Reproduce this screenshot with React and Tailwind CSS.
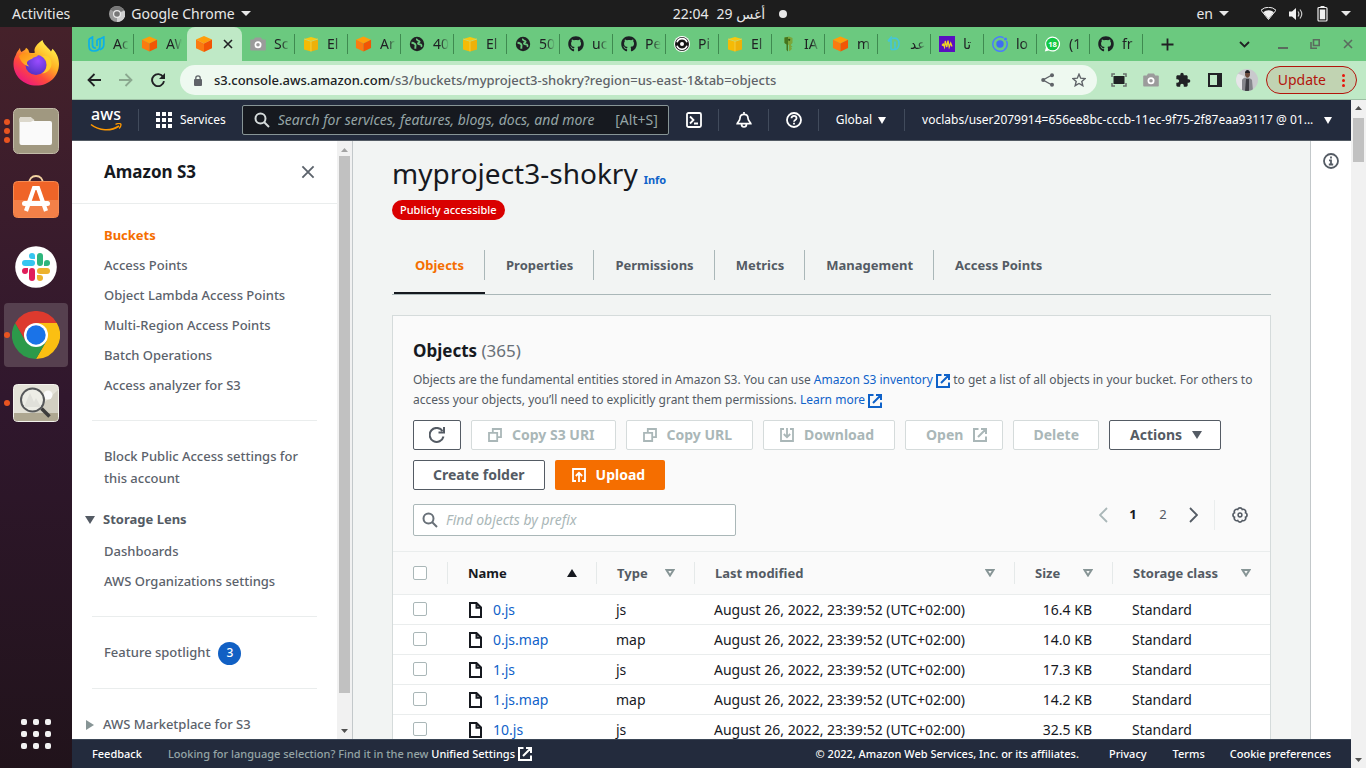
import React from "react";
import { FaGithub } from "react-icons/fa";

const tri = "M0 0h10L5 8z";

function Down({ className = "", w = 10, h = 8 }) {
  return (
    <svg width={w} height={h} viewBox="0 0 10 8" preserveAspectRatio="none" className={className} aria-hidden="true">
      <path d={tri} fill="currentColor" />
    </svg>
  );
}

function SortDown() {
  return (
    <svg width="10" height="8" viewBox="0 0 10 8" className="shrink-0 text-[#879596]" aria-hidden="true">
      <path d="M1.500 1h7L5 6.500z" fill="none" stroke="currentColor" strokeWidth="2" />
    </svg>
  );
}

function Cube() {
  return (
    <svg width="18" height="18" viewBox="0 0 18 18" aria-hidden="true">
      <path d="M9 1l8 3.4-8 4.2-8-4.2z" fill="#ff9d0a" />
      <path d="M1 4.4l8 4.2V17l-8-3.8z" fill="#fb7a10" />
      <path d="M17 4.4L9 8.6V17l8-3.8z" fill="#f25505" />
    </svg>
  );
}

function YellowBox() {
  return (
    <svg width="16" height="16" viewBox="0 0 16 16" aria-hidden="true">
      <path d="M1 3l7-2 7 2-7 2z" fill="#f7c90f" />
      <path d="M1 3.5l7 2V15.500L1 13.500z" fill="#f5bb06" />
      <path d="M15 3.5l-7 2V15.500l7-2z" fill="#eeb109" />
      <path d="M1 3l7 2.300L15 3M8 5.300V15.500" fill="none" stroke="#f9dc62" strokeWidth="0.600" />
    </svg>
  );
}

function GlobeIcon() {
  return (
    <svg width="16" height="16" viewBox="0 0 16 16" aria-hidden="true">
      <circle cx="8" cy="8" r="7.2" fill="#202124" />
      <path d="M2.500 6.800c2 .2 3.600.9 4 2.200.3 1.300-.6 1.400 0 3.800" fill="none" stroke="#6bc97f" strokeWidth="1.900" />
      <path d="M8 2.600c-.8 1.500 1 2 2.200 2.400 1 .4.300 1.500-.8 1.900-1.200.5 0 1.400 1.400 1.500 1.700.100 2.200 1 1.400 2.400" fill="none" stroke="#6bc97f" strokeWidth="1.700" />
    </svg>
  );
}

function CameraIcon() {
  return (
    <svg width="16" height="16" viewBox="0 0 16 16" aria-hidden="true">
      <path d="M5 1.5h6l1.2 2H15a.8.8 0 01.8.8v9.4a.8.8 0 01-.8.8H1a.8.8 0 01-.8-.8V4.3A.8.8 0 011 3.500h2.800z" fill="#9b9b9b" />
      <circle cx="8" cy="8.800" r="3.500" fill="#fff" />
      <circle cx="8" cy="8.800" r="1.800" fill="#9b9b9b" />
    </svg>
  );
}

function UdacityIcon() {
  return (
    <svg width="17" height="16" viewBox="0 0 17 16" fill="none" stroke="#0bb0e8" strokeWidth="1.700" aria-hidden="true">
      <path d="M1 3.200L4.500 1v8c0 2 1.500 3.200 3.300 3.200M1 3.200V10c0 3 2 5 5 5 4.500 0 6-3 6-5.500V3l3.800-2v7.500c0 2.500-2 4.500-4 5.300M9 4v6M9 4l3-1.500" />
    </svg>
  );
}

function CircleCi() {
  return (
    <svg width="16" height="16" viewBox="0 0 16 16" aria-hidden="true">
      <circle cx="8" cy="8" r="8" fill="#fff" />
      <circle cx="8" cy="8" r="7" fill="#161616" />
      <path d="M3 6.200a5.300 5.300 0 0110 0M3 9.800a5.300 5.300 0 0010 0" fill="none" stroke="#fff" strokeWidth="1.600" />
      <circle cx="8" cy="8" r="2" fill="#fff" />
    </svg>
  );
}

function KeyIcon() {
  return (
    <svg width="16" height="16" viewBox="0 0 16 16" aria-hidden="true">
      <path d="M4.500 1.500L9 .500l3.500 1.500v5L11 8.500v1l1.500 1-1.500 1 1 1-1 1.500-2 1.200V9L4.500 7z" fill="#7ba63a" />
      <path d="M4.500 1.500L8 1v14.500L6.500 14V8.500l-2-1.500z" fill="#44741c" />
      <circle cx="9.200" cy="3.800" r="1.100" fill="#2f5412" />
    </svg>
  );
}

function PaleD() {
  return (
    <svg width="16" height="16" viewBox="0 0 16 16" fill="none" stroke="#45c6d8" strokeWidth="1.600" aria-hidden="true">
      <path d="M2 5l3-3.500v12M5 5H2M6 2.500c5-1.500 7 1.500 7 5s-2 6-4 6V5.500M9 13.500H5" />
    </svg>
  );
}

function PurpleSquare() {
  return (
    <svg width="16" height="16" viewBox="0 0 16 16" aria-hidden="true">
      <path d="M0 0h16v16H0z" fill="#5a0fc0" />
      <path d="M3 9.500l1.200-1.500L5.500 11 6.300 5l1.500 6L9 4.500l1.200 6.500 1.500-4L13 10.500" fill="none" stroke="#f1d325" strokeWidth="1.300" />
    </svg>
  );
}

function IonicIcon() {
  return (
    <svg width="16" height="16" viewBox="0 0 16 16" aria-hidden="true">
      <path d="M11.500 1.800A7.200 7.200 0 1014.500 5" fill="none" stroke="#4b7bff" strokeWidth="1.500" />
      <circle cx="8" cy="8" r="3.700" fill="#3f6df0" />
      <circle cx="13.500" cy="3" r="1.600" fill="#4b7bff" />
    </svg>
  );
}

function WhatsApp() {
  return (
    <svg width="17" height="16" viewBox="0 0 17 16" aria-hidden="true">
      <path d="M8.500.500a7.500 7.500 0 11-3.700 14L.800 15.500l1.200-4A7.500 7.500 0 018.500.500z" fill="#fff" />
      <circle cx="8.500" cy="8" r="6.300" fill="#12c843" />
      <text x="8.500" y="10.700" textAnchor="middle" fontSize="7.500" fontWeight="700" fill="#fff" fontFamily="Noto Sans, sans-serif">18</text>
    </svg>
  );
}

function Github() {
  return <FaGithub size={16} color="#1c2024" aria-hidden="true" />;
}

const TABS = [
  [UdacityIcon, "Ac"],
  [Cube, "AW"],
  [Cube, null],
  [CameraIcon, "Sc"],
  [YellowBox, "El"],
  [Cube, "Ar"],
  [GlobeIcon, "40"],
  [YellowBox, "El"],
  [GlobeIcon, "50"],
  [Github, "uc"],
  [Github, "Pe"],
  [CircleCi, "Pi"],
  [YellowBox, "El"],
  [KeyIcon, "IA"],
  [Cube, "m"],
  [PaleD, "عد"],
  [PurpleSquare, "تا"],
  [IonicIcon, "lo"],
  [WhatsApp, "(1"],
  [Github, "fr"],
];

function CloseX({ size = 10, className = "" }) {
  return (
    <svg width={size} height={size} viewBox="0 0 10 10" className={className} aria-hidden="true">
      <path d="M1 1l8 8M9 1L1 9" stroke="currentColor" strokeWidth={size > 12 ? 1.3 : 1.6} fill="none" />
    </svg>
  );
}

function TopBar() {
  return (
    <header className="grid h-[27px] shrink-0 grid-cols-[1fr_auto_1fr] items-center bg-[#1d1d1d] text-sm text-[#e8e8e8]">
      <div className="flex items-center gap-[39px] pl-3">
        <button>Activities</button>
        <button className="flex items-center gap-1.5">
          <svg width="16" height="16" viewBox="0 0 16 16" aria-hidden="true">
            <circle cx="8" cy="8" r="8" fill="#9a9a9a" />
            <path d="M8 8L1.500 3.500A8 8 0 0114.800 4z" fill="#777" />
            <path d="M8 8l7.500-3.500A8 8 0 018 16z" fill="#d0d0d0" />
            <circle cx="8" cy="8" r="4" fill="#ececec" />
            <circle cx="8" cy="8" r="2.800" fill="#777" />
          </svg>
          <span>Google Chrome</span>
          <Down w={10} h={5} />
        </button>
      </div>
      <button className="flex items-center gap-2 pl-[94px]">
        <span>22:04</span>
        <span dir="ltr">29 أغس</span>
        <span className="ml-1.5 size-2 rounded-full bg-[#e8e8e8]" />
      </button>
      <div className="flex items-center justify-end pr-[15px]">
        <button className="mr-8 flex items-center gap-1.5">
          en <Down w={10} h={5} />
        </button>
        <button className="flex items-center gap-[13px]" aria-label="System">
          <svg width="15" height="13" viewBox="0 0 15 13" aria-hidden="true">
            <path d="M0 3.200a11 11 0 0115 0L7.500 12.500z" fill="none" stroke="#f0f0f0" strokeWidth="1" />
            <path d="M2.200 5.200a8.500 8.500 0 0110.600 0L7.500 12z" fill="#f0f0f0" />
          </svg>
          <svg width="15" height="14" viewBox="0 0 15 14" aria-hidden="true">
            <path d="M0 4.500h3L7 1v12L3 9.500H0z" fill="#f0f0f0" />
            <path d="M9 4.500q1.800 2.500 0 5M11 2.500q3.500 4.500 0 9" fill="none" stroke="#c8c8c8" strokeWidth="1.200" />
          </svg>
          <svg width="11" height="16" viewBox="0 0 11 16" aria-hidden="true">
            <path d="M3.500 0h4v1.500h-4z" fill="#f0f0f0" />
            <rect x="1" y="1.500" width="9" height="13.500" rx="1" fill="none" stroke="#f0f0f0" strokeWidth="1.200" />
            <path d="M2.800 3.500h5.400v9.800H2.800z" fill="#f0f0f0" />
          </svg>
          <Down w={10} h={5} />
        </button>
      </div>
    </header>
  );
}

function Firefox() {
  return (
    <svg width="46" height="46" viewBox="0 0 46 48" preserveAspectRatio="none" aria-hidden="true">
      <defs>
        <linearGradient id="ffa" x1="0.850" y1="0.100" x2="0.200" y2="1">
          <stop offset="0" stopColor="#fff44f" />
          <stop offset="0.350" stopColor="#ffb224" />
          <stop offset="0.650" stopColor="#ff4a3c" />
          <stop offset="1" stopColor="#e8108a" />
        </linearGradient>
        <radialGradient id="ffb" cx="0.600" cy="0.300" r="0.800">
          <stop offset="0" stopColor="#9a4cff" />
          <stop offset="1" stopColor="#4b2fbf" />
        </radialGradient>
        <linearGradient id="ffc" x1="0" y1="0" x2="1" y2="1">
          <stop offset="0" stopColor="#ff8a16" />
          <stop offset="1" stopColor="#ffc62a" />
        </linearGradient>
      </defs>
      <path d="M29.500 0c1 5 6 8 8.500 12l1.500-3c4.500 5 6.500 10 6.500 16 0 13-10 22.500-22.500 22.500S.500 38 .500 25c0-4 1-7 2.500-9.500.500-2 1.500-4 3-5.500l1-2c0 2 .500 3.500 1.500 4.500 2-1.500 4-2 4.500-4.500 2 1 3 3 3 5 2 .500 4 1 6 0C20 9 24 4 29.500 0z" fill="url(#ffa)" />
      <circle cx="23" cy="26" r="10.500" fill="url(#ffb)" />
      <path d="M6 17c3-5 10-4 13-2 1-.500 5-.500 6 1-1 1.500-3 2-5 2.500-1 2-5 2-6 5-.500 3 3 4 3 4-5 0-9-4-11-10.500z" fill="url(#ffc)" />
      <path d="M29 17c7 4 6 14 0 18 8-1 12-9 8-16-2-3-5-3-8-2z" fill="#ffd22e" opacity="0.900" />
    </svg>
  );
}

function FilesApp() {
  return (
    <svg width="46" height="46" viewBox="0 0 46 46" aria-hidden="true">
      <rect x="0.500" y="0.500" width="45" height="45" rx="5" fill="#a09880" stroke="#c2bba8" />
      <path d="M6.500 11a2 2 0 012-2h9l4 4H37a2 2 0 012 2v20a2 2 0 01-2 2H8.500a2 2 0 01-2-2z" fill="#fafafa" />
      <path d="M6.500 14v-3a2 2 0 012-2h9l4 3-4 2z" fill="#dcd8cc" />
    </svg>
  );
}

function SoftwareApp() {
  return (
    <svg width="46" height="48" viewBox="0 0 46 48" aria-hidden="true">
      <path d="M16 9c0-5 3-8 7-8s7 3 7 8" fill="none" stroke="#f3d3a2" strokeWidth="2" />
      <rect x="0.500" y="6.500" width="45" height="36" rx="4" fill="#ef6428" stroke="#f58b52" />
      <path d="M1 25h44v13a4 4 0 01-4 4H5a4 4 0 01-4-4z" fill="#f38048" />
      <path d="M13 36l8-23h4l8 23" fill="none" stroke="#fff" strokeWidth="4.200" />
      <rect x="9" y="26" width="28" height="5" rx="2.500" fill="#fff" />
    </svg>
  );
}

function SlackApp() {
  return (
    <svg width="42" height="42" viewBox="0 0 42 42" aria-hidden="true">
      <circle cx="21" cy="21" r="20.800" fill="#fff" />
      <g fill="#36c5f0">
        <rect x="7" y="14" width="13" height="6" rx="3" />
        <path d="M20 7v6h-3a3 3 0 113-3z" />
      </g>
      <g fill="#2eb67d">
        <rect x="22" y="7" width="6" height="13" rx="3" />
        <path d="M29 20v-3a3 3 0 113 3z" />
      </g>
      <g fill="#ecb22e">
        <rect x="22" y="22" width="13" height="6" rx="3" />
        <path d="M22 29h3a3 3 0 11-3 3z" />
      </g>
      <g fill="#e01e5a">
        <rect x="14" y="22" width="6" height="13" rx="3" />
        <path d="M13 22v3a3 3 0 11-3-3z" />
      </g>
    </svg>
  );
}

function ChromeApp() {
  return (
    <svg width="48" height="48" viewBox="0 0 48 48" aria-hidden="true">
      <path d="M24 12h20.800A24 24 0 0124 48l10.400-18z" fill="#fbbf12" />
      <path d="M3.200 12l10.400 18L24 36l10.400-6L24 48A24 24 0 013.200 12z" fill="#2c9a4a" />
      <path d="M3.200 12A24 24 0 0144.800 12H24L13.600 30z" fill="#dd3a2e" />
      <circle cx="24" cy="24" r="12" fill="#fff" />
      <circle cx="24" cy="24" r="9.700" fill="#1a73e8" />
    </svg>
  );
}

function ViewerApp() {
  return (
    <svg width="46" height="38" viewBox="0 0 46 38" aria-hidden="true">
      <rect x="0.500" y="0.500" width="45" height="37" rx="4" fill="#e4e2d8" stroke="#f3f2ec" />
      <path d="M1 29h44v5a3 3 0 01-3 3H4a3 3 0 01-3-3z" fill="#aea791" />
      <path d="M20 29L45 6v23z" fill="#d2cfc2" />
      <circle cx="35" cy="11" r="4.500" fill="#fafafa" />
      <circle cx="19.500" cy="16" r="11.500" fill="#eeeee9" fillOpacity="0.850" stroke="#56585a" strokeWidth="2" />
      <path d="M11 23l6-14 4 9 2-4 5 9z" fill="#e0e0da" />
      <path d="M28.500 24.500l8 8" stroke="#3c3c3c" strokeWidth="3.500" />
    </svg>
  );
}

const DOCK = [
  ["Firefox", Firefox, 0],
  ["Files", FilesApp, 3],
  ["Ubuntu Software", SoftwareApp, 0],
  ["Slack", SlackApp, 0],
  ["Google Chrome", ChromeApp, 1],
  ["Image Viewer", ViewerApp, 1],
];

function Dock() {
  return (
    <nav aria-label="Dock" className="flex w-[72px] shrink-0 flex-col items-center justify-between bg-linear-to-b from-[#45212a] via-[#30172d] to-[#21131b] pt-1">
      <div className="flex flex-col gap-1">
        {DOCK.map(([name, Icon, dots]) => (
          <button
            key={name}
            aria-label={name}
            className={`relative flex size-16 items-center justify-center rounded ${name === "Google Chrome" ? "bg-[#56404f]" : ""}`}
          >
            <span className="absolute top-0 bottom-0 left-0 flex flex-col justify-center gap-[3px]">
              {Array.from({ length: dots }, (_, i) => (
                <span key={i} className="size-1.5 rounded-full bg-[#e95420]" />
              ))}
            </span>
            <Icon />
          </button>
        ))}
      </div>
      <button aria-label="Show applications" className="mb-[19px] grid grid-cols-3 gap-1.5">
        {Array.from({ length: 9 }, (_, i) => (
          <span key={i} className="size-1.5 rounded-[2px] bg-[#f2f2f2]" />
        ))}
      </button>
    </nav>
  );
}

function TabStrip() {
  return (
    <div className="flex h-[34px] shrink-0 items-stretch bg-[#6bc97f] pl-[9px] text-sm text-[#202124]">
      {TABS.map(([Icon, label], i) =>
        label === null ? (
          <button key={i} aria-label="Active tab" className="flex w-[55px] shrink-0 items-center gap-2.5 rounded-t-lg bg-[#bfe9c6] pl-2">
            <Icon />
            <CloseX />
          </button>
        ) : (
          <button key={i} className="flex w-[53px] shrink-0 items-center pl-[7px]">
            <span className="flex w-[17px] justify-center"><Icon /></span>
            <span className="ml-2 w-4 overflow-hidden text-left whitespace-nowrap [mask-image:linear-gradient(to_right,#000_45%,transparent)]">{label}</span>
            <span className={`ml-auto h-5 w-px ${i === 1 ? "bg-transparent" : "bg-[#3f8a50]"}`} />
          </button>
        )
      )}
      <button aria-label="New tab" className="ml-[18px] flex items-center">
        <svg width="13" height="13" viewBox="0 0 13 13" aria-hidden="true">
          <path d="M6.500 0.500v12M0.500 6.500h12" stroke="#202124" strokeWidth="1.800" />
        </svg>
      </button>
      <div className="ml-auto flex items-center pr-[13px] text-[#5a6b5e]">
        <button aria-label="Search tabs">
          <svg width="11" height="7" viewBox="0 0 11 7" aria-hidden="true">
            <path d="M1 1l4.500 4.500L10 1" fill="none" stroke="#202124" strokeWidth="1.800" />
          </svg>
        </button>
        <button aria-label="Minimize" className="ml-7 mt-2">
          <svg width="10" height="2" aria-hidden="true"><path d="M0 0h10v2H0z" fill="currentColor" /></svg>
        </button>
        <button aria-label="Restore" className="ml-[22px]">
          <svg width="10" height="10" viewBox="0 0 10 10" fill="none" stroke="currentColor" strokeWidth="1.600" aria-hidden="true">
            <path d="M3.500 0.800h5.700v5.700H3.500zM1 3v6.200h6" />
          </svg>
        </button>
        <button aria-label="Close" className="ml-[23px]"><CloseX size={10} /></button>
      </div>
    </div>
  );
}

function Toolbar() {
  return (
    <div className="flex h-[39px] shrink-0 items-center border-b border-[#9dbfa4] bg-[#bfe9c6] pl-[15px] pr-[9px] text-sm text-[#202124]">
      <button aria-label="Back">
        <svg width="14" height="14" viewBox="0 0 14 14" fill="none" stroke="#202124" strokeWidth="1.800" aria-hidden="true"><path d="M14 7H1.500M7.500 1l-6 6 6 6" /></svg>
      </button>
      <button aria-label="Forward" className="ml-[18px]">
        <svg width="14" height="14" viewBox="0 0 14 14" fill="none" stroke="#8ba88f" strokeWidth="1.800" aria-hidden="true"><path d="M0 7h12.500M6.500 1l6 6-6 6" /></svg>
      </button>
      <button aria-label="Reload" className="ml-[18px]">
        <svg width="14" height="14" viewBox="0 0 14 14" aria-hidden="true">
          <path d="M12.200 4A6 6 0 1013 8.200" fill="none" stroke="#202124" strokeWidth="1.900" />
          <path d="M14 0v6H8z" fill="#202124" />
        </svg>
      </button>
      <div className="ml-[15px] flex h-[30px] min-w-0 flex-1 items-center rounded-full bg-[#eef9f0] pr-[11px] pl-3.5">
        <svg width="8" height="11" viewBox="0 0 8 11" className="shrink-0" aria-hidden="true">
          <rect x="0" y="4" width="8" height="7" rx="1" fill="#5f6368" />
          <path d="M1.800 4.500V3a2.200 2.200 0 014.400 0v1.500" fill="none" stroke="#5f6368" strokeWidth="1.300" />
        </svg>
        <div className="ml-3 min-w-0 flex-1 overflow-hidden text-[13px] font-medium whitespace-nowrap text-[#5f6368]" role="textbox" aria-label="Address">
          <span className="text-[#202124]">s3.console.aws.amazon.com</span>/s3/buckets/myproject3-shokry?region=us-east-1&amp;tab=objects
        </div>
        <button aria-label="Share">
          <svg width="13" height="14" viewBox="0 0 13 14" fill="#5f6368" aria-hidden="true">
            <path d="M11 2L2 7l9 5" fill="none" stroke="#5f6368" strokeWidth="1.400" />
            <circle cx="11" cy="2.200" r="2" /><circle cx="2.200" cy="7" r="2" /><circle cx="11" cy="11.800" r="2" />
          </svg>
        </button>
        <button aria-label="Bookmark" className="ml-[18px]">
          <svg width="14" height="14" viewBox="0 0 14 14" fill="none" stroke="#5f6368" strokeWidth="1.400" aria-hidden="true">
            <path d="M7 1.200l1.700 4 4.400.400-3.300 2.900 1 4.200L7 10.500l-3.800 2.200 1-4.200L.900 5.600l4.400-.400z" />
          </svg>
        </button>
      </div>
      <div className="flex items-center gap-4 pl-3.5">
        <button aria-label="Fullscreen capture">
          <svg width="16" height="14" viewBox="0 0 16 14" aria-hidden="true">
            <path d="M1 4V1h3M12 1h3v3M15 10v3h-3M4 13H1v-3" fill="none" stroke="#6a6f6c" strokeWidth="1.500" />
            <rect x="2.500" y="3" width="11" height="8" fill="#202124" />
          </svg>
        </button>
        <button aria-label="Screenshot"><CameraIcon /></button>
        <button aria-label="Extensions">
          <svg width="16" height="16" viewBox="0 0 24 24" fill="#202124" aria-hidden="true">
            <path d="M20.500 11H19V7c0-1.100-.900-2-2-2h-4V3.500a2.500 2.500 0 00-5 0V5H4c-1.100 0-2 .900-2 2v3.800h1.500a2.700 2.700 0 010 5.400H2V20c0 1.100.900 2 2 2h3.800v-1.500a2.700 2.700 0 015.400 0V22H17c1.100 0 2-.900 2-2v-4h1.500a2.500 2.500 0 000-5z" />
          </svg>
        </button>
        <button aria-label="Side panel">
          <svg width="16" height="14" viewBox="0 0 16 14" aria-hidden="true"><path d="M1 0h14v14H1zM3 2v10h7V2z" fillRule="evenodd" fill="#202124" /></svg>
        </button>
        <button aria-label="Profile" className="-ml-[3px]">
          <svg width="22" height="22" viewBox="0 0 22 22" aria-hidden="true">
            <clipPath id="pf"><circle cx="11" cy="11" r="11" /></clipPath>
            <g clipPath="url(#pf)">
              <path d="M0 0h22v22H0z" fill="#c9c9cd" />
              <path d="M0 4l8 3-2 15H0z" fill="#e6e6e8" />
              <path d="M6 22V11c1-3 8-3 10 0l1 11z" fill="#85868c" />
              <path d="M10 10h3v12h-4z" fill="#3b3c42" />
              <path d="M9 5c0-4 5-4 5 0 0 5-5 5-5 0z" fill="#6b4a3c" />
              <path d="M9 4c0-4 5-4 5 0z" fill="#1d1d22" />
            </g>
          </svg>
        </button>
      </div>
      <button className="ml-2 flex h-7 items-center gap-4 rounded-full border border-[#b3140c] bg-[#c1d3b2] px-[11px] text-[#b3140c]">
        Update
        <span className="flex flex-col gap-0.5">
          <span className="size-[3px] rounded-full bg-[#e8140c]" />
          <span className="size-[3px] rounded-full bg-[#e8140c]" />
          <span className="size-[3px] rounded-full bg-[#e8140c]" />
        </span>
      </button>
    </div>
  );
}

function NavSep({ className = "" }) {
  return <span className={`h-[22px] w-px shrink-0 bg-[#414b5c] ${className}`} />;
}

function Magnifier({ className = "" }) {
  return (
    <svg width="16" height="16" viewBox="0 0 16 16" fill="none" stroke="currentColor" strokeWidth="2" className={className} aria-hidden="true">
      <circle cx="6.500" cy="6.500" r="5" /><path d="M10 10l5 5" />
    </svg>
  );
}

function AwsNav() {
  return (
    <header className="flex h-[41px] shrink-0 items-center border-b border-[#545b64] bg-[#232b3d] pl-[18px] pr-[19px] text-xs text-white">
      <a href="#home" className="flex w-8 flex-col items-center" aria-label="aws home">
        <span className="h-3.5 text-base leading-[10px] font-medium">aws</span>
        <svg width="32" height="8" viewBox="0 0 32 8" fill="none" aria-hidden="true">
          <path d="M1 1.500C9 8 21 8.500 29 3" stroke="#ff9900" strokeWidth="1.600" />
          <path d="M25.500 1.300c2-.800 4.500-.900 5.200-.300.500.700-.300 3-1.500 4.500" stroke="#ff9900" strokeWidth="1.300" />
        </svg>
      </a>
      <NavSep className="ml-4" />
      <button className="ml-[17px] flex items-center gap-2">
        <svg width="16" height="16" viewBox="0 0 16 16" fill="#fff" aria-hidden="true">
          <path d="M0 0h4v4H0zM6 0h4v4H6zM12 0h4v4h-4zM0 6h4v4H0zM6 6h4v4H6zM12 6h4v4h-4zM0 12h4v4H0zM6 12h4v4H6zM12 12h4v4h-4z" />
        </svg>
        Services
      </button>
      <label className="ml-4 flex h-[30px] w-[427px] items-center rounded-[2px] border border-[#879596] bg-[#16191f] pl-[11px] pr-2.5">
        <Magnifier className="shrink-0 text-[#d5dbdb]" />
        <input
          aria-label="Search"
          placeholder="Search for services, features, blogs, docs, and more"
          className="ml-2 min-w-0 flex-1 bg-transparent text-sm outline-none placeholder:text-[#95a5a6] placeholder:italic"
        />
        <span className="text-sm text-[#95a5a6]">[Alt+S]</span>
      </label>
      <button aria-label="CloudShell" className="ml-[17px]">
        <svg width="16" height="16" viewBox="0 0 16 16" fill="none" stroke="#fff" strokeWidth="1.800" aria-hidden="true">
          <rect x="1" y="1" width="14" height="14" rx="1.500" /><path d="M4 4.500L7.500 8 4 11.500M8 11.500h4" />
        </svg>
      </button>
      <NavSep className="ml-4" />
      <button aria-label="Notifications" className="ml-[17px]">
        <svg width="16" height="16" viewBox="0 0 16 16" fill="none" stroke="#fff" strokeWidth="1.700" aria-hidden="true">
          <path d="M8 0v2M8 2.300c-2.800 0-4 1.800-4 4C4 9 1.500 10 1.200 11.700h13.600C14.500 10 12 9 12 6.300c0-2.200-1.200-4-4-4zM5.500 12c0 4 5 4 5 0" />
        </svg>
      </button>
      <NavSep className="ml-4" />
      <button aria-label="Help" className="ml-[17px]">
        <svg width="16" height="16" viewBox="0 0 16 16" fill="none" stroke="#fff" strokeWidth="1.800" aria-hidden="true">
          <circle cx="8" cy="8" r="7" /><path d="M5.500 6.300c0-3.200 5-3.100 5 0 0 1.700-2.500 1.700-2.500 3.400M8 10.800v1.700" />
        </svg>
      </button>
      <NavSep className="ml-4" />
      <button className="ml-[17px] flex items-center gap-1.5">Global <Down w={8} h={7} /></button>
      <NavSep className="ml-[18px]" />
      <button className="ml-[17px] flex min-w-0 flex-1 items-center justify-between gap-1 whitespace-nowrap">
        <span>voclabs/user2079914=656ee8bc-cccb-11ec-9f75-2f87eaa93117 @ 01...</span>
        <Down w={8} h={7} className="shrink-0" />
      </button>
    </header>
  );
}

function SideLink({ children, className = "" }) {
  return <a href="#nav" className={`block leading-[30px] ${className}`}>{children}</a>;
}

function Sidebar() {
  return (
    <aside className="flex w-[281px] shrink-0 border-r border-[#c3c8ca] bg-white text-[13px] font-medium text-[#5b626b]">
      <div className="min-w-0 flex-1 overflow-hidden">
        <div className="flex h-[63px] items-center justify-between border-b border-[#eaeded] pl-8 pr-[22px]">
          <h2 className="text-[17px] font-bold text-[#16191f]">Amazon S3</h2>
          <button aria-label="Close navigation"><CloseX size={14} /></button>
        </div>
        <nav className="px-5 pt-4">
          <div className="pl-3">
            <SideLink className="font-bold text-[#f56e00]">Buckets</SideLink>
            <SideLink>Access Points</SideLink>
            <SideLink>Object Lambda Access Points</SideLink>
            <SideLink>Multi-Region Access Points</SideLink>
            <SideLink>Batch Operations</SideLink>
            <SideLink>Access analyzer for S3</SideLink>
          </div>
          <hr className="mt-5 border-[#eaeded]" />
          <a href="#block" className="mt-6 block pl-3 leading-[22px]">Block Public Access settings for this account</a>
          <button className="-ml-[7px] mt-4 flex h-[30px] items-center gap-2 font-bold text-[#545b64]"><Down /> Storage Lens</button>
          <div className="pl-3 pt-px">
            <SideLink>Dashboards</SideLink>
            <SideLink>AWS Organizations settings</SideLink>
          </div>
          <hr className="mt-5 border-[#eaeded]" />
          <a href="#spotlight" className="mt-[21px] flex h-[30px] items-center gap-2 pl-3">
            Feature spotlight
            <span className="flex size-[23px] items-center justify-center rounded-full bg-[#1160c4] text-xs text-white">3</span>
          </a>
          <hr className="mt-5 border-[#eaeded]" />
          <button className="-ml-[7px] mt-[21px] flex h-[30px] items-center gap-[9px]">
            <svg width="9" height="10" viewBox="0 0 9 10" aria-hidden="true"><path d="M1 0l8 5-8 5z" fill="#879596" /></svg>
            AWS Marketplace for S3
          </button>
        </nav>
      </div>
      <div className="flex w-[15px] flex-col items-center gap-1 bg-[#f1f1f1] py-1.5">
        <Down w={7} h={4} className="mt-px shrink-0 rotate-180 text-[#a3a3a3]" />
        <div className="w-[11px] flex-1 bg-[#c1c1c1]" />
        <div className="h-7 shrink-0" />
        <Down w={7} h={4} className="shrink-0 text-[#505050]" />
      </div>
    </aside>
  );
}

function External({ className = "", size = 14 }) {
  return (
    <svg width={size} height={size} viewBox="0 0 14 14" fill="none" stroke="currentColor" strokeWidth="2" className={className} aria-hidden="true">
      <path d="M5.500 1H1v12h12V8.500M8 1h5v5M13 1L5 9" />
    </svg>
  );
}

function CopyIcon() {
  return (
    <svg width="14" height="14" viewBox="0 0 14 14" fill="none" stroke="currentColor" strokeWidth="1.800" aria-hidden="true">
      <path d="M1 4.800h8.200V13H1zM4.800 4.500V1H13v8.200H9.500" />
    </svg>
  );
}

function DownloadIcon() {
  return (
    <svg width="14" height="14" viewBox="0 0 14 14" fill="none" stroke="currentColor" strokeWidth="1.800" aria-hidden="true">
      <path d="M4 1H1v12h12V1h-3M7 0v9M3.800 6L7 9.200 10.200 6" />
    </svg>
  );
}

function UploadIcon() {
  return (
    <svg width="14" height="14" viewBox="0 0 14 14" fill="none" stroke="currentColor" strokeWidth="1.800" aria-hidden="true">
      <path d="M4 13H1V1h12v12h-3M7 14V5M3.800 8L7 4.800 10.200 8" />
    </svg>
  );
}

function Btn({ children, disabled, className = "" }) {
  return (
    <button
      disabled={disabled}
      className={`flex h-[30px] items-center rounded-[2px] border bg-white text-sm font-bold ${disabled ? "border-[#d5dbdb] text-[#aab7b8]" : "border-[#545b64] text-[#545b64]"} ${className}`}
    >
      {children}
    </button>
  );
}

const ROWS = [
  ["0.js", "js", "16.4 KB"],
  ["0.js.map", "map", "14.0 KB"],
  ["1.js", "js", "17.3 KB"],
  ["1.js.map", "map", "14.2 KB"],
  ["10.js", "js", "32.5 KB"],
];

function Check({ label }) {
  return <input type="checkbox" aria-label={label} className="block size-3.5 appearance-none rounded-[2px] border border-[#aab7b8] bg-white" />;
}

function Th({ children, icon }) {
  return (
    <th scope="col" className="py-2.5 pr-0 text-[13px] font-bold text-[#545b64]">
      <span className="flex h-[22px] items-center justify-between border-l border-[#e5e9e9] pl-5 pr-[19px]">
        {children}
        {icon}
      </span>
    </th>
  );
}

function ObjectsTable() {
  return (
    <table className="w-full table-fixed border-t border-[#eaeded] text-left text-sm text-[#16191f]">
      <colgroup>
        <col className="w-[54px]" />
        <col className="w-[149px]" />
        <col className="w-[98px]" />
        <col />
        <col className="w-[98px]" />
        <col className="w-[158px]" />
      </colgroup>
      <thead className="bg-[#fafafa]">
        <tr className="h-[43px] border-b border-[#eaeded]">
          <th className="pl-5"><Check label="Select all" /></th>
          <Th icon={<Down className="rotate-180 text-[#16191f]" />}><span className="text-[#16191f]">Name</span></Th>
          <Th icon={<SortDown />}>Type</Th>
          <Th icon={<SortDown />}>Last modified</Th>
          <Th icon={<SortDown />}>Size</Th>
          <Th icon={<SortDown />}>Storage class</Th>
        </tr>
      </thead>
      <tbody className="bg-white">
        {ROWS.map(([name, type, size]) => (
          <tr key={name} className="h-[30px] border-b border-[#eaeded]">
            <td className="pt-[7px] pl-5 align-top"><Check label={`Select ${name}`} /></td>
            <td className="pl-[22px]">
              <a href={`#${name}`} className="flex items-center gap-[11px] text-[#0f62c9]">
                <svg width="13" height="16" viewBox="0 0 13 16" fill="none" stroke="#16191f" strokeWidth="2" aria-hidden="true">
                  <path d="M1 1h6.500L12 5.500V15H1zM7.500 1v4.800H12" />
                </svg>
                {name}
              </a>
            </td>
            <td className="pl-5">{type}</td>
            <td className="pl-5">August 26, 2022, 23:39:52 (UTC+02:00)</td>
            <td className="pr-5 text-right">{size}</td>
            <td className="pl-5">Standard</td>
          </tr>
        ))}
      </tbody>
    </table>
  );
}

const PAGE_TABS = ["Objects", "Properties", "Permissions", "Metrics", "Management", "Access Points"];

function Main() {
  return (
    <main className="min-w-0 flex-1 overflow-hidden bg-[#f2f4f3] px-[39px] text-[13px]">
      <div className="mt-3 flex items-baseline gap-1.5">
        <h1 className="text-[28px] leading-10 text-[#16191f]">myproject3-shokry</h1>
        <a href="#info" className="text-[11px] font-bold text-[#0f62c9]">Info</a>
      </div>
      <div className="mt-[7px] flex">
        <span className="rounded-full bg-[#d90000] px-2 text-[11px] leading-5 font-medium text-white">Publicly accessible</span>
      </div>
      <div role="tablist" className="mt-[30px] flex border-b border-[#aab7b8] pl-0.5">
        {PAGE_TABS.map((t, i) => (
          <button
            key={t}
            role="tab"
            className={`border-b-2 pb-3 font-bold ${i === 0 ? "border-[#16191f] text-[#f56e00]" : "border-transparent text-[#545b64]"}`}
          >
            <span className={`block pr-5 pl-[21px] leading-[30px] ${i < 5 ? "border-r border-[#aab7b8]" : ""}`}>{t}</span>
          </button>
        ))}
      </div>
      <section className="mt-5 border border-[#d5dbdb] bg-[#fafafa]">
        <div className="px-5 pt-[22px] pb-[15px]">
          <h2 className="text-[17px] leading-[26px] font-bold text-[#16191f]">
            Objects <span className="font-normal text-[#687078]">(365)</span>
          </h2>
          <p className="-mr-3 mt-1.5 text-xs leading-5 text-[#545b64]">
            Objects are the fundamental entities stored in Amazon S3. You can use{" "}
            <a href="#inventory" className="text-[#0f62c9]">Amazon S3 inventory <External className="inline" /></a>{" "}
            to get a list of all objects in your bucket. For others to access your objects, you’ll need to explicitly grant them permissions.{" "}
            <a href="#learn" className="whitespace-nowrap text-[#0f62c9]">Learn more <External className="inline" /></a>
          </p>
          <div className="mt-2.5 flex flex-wrap gap-2.5">
            <Btn className="px-[15px]">
              <svg width="16" height="16" viewBox="0 0 16 16" fill="none" stroke="currentColor" strokeWidth="2" aria-label="Refresh">
                <path d="M14.500 9.500A7 7 0 1113.500 4M15 0v5.500H9.500" />
              </svg>
            </Btn>
            <Btn disabled className="gap-2.5 pl-4 pr-5"><CopyIcon />Copy S3 URI</Btn>
            <Btn disabled className="gap-2.5 pl-4 pr-5"><CopyIcon />Copy URL</Btn>
            <Btn disabled className="gap-2.5 pl-4 pr-5"><DownloadIcon />Download</Btn>
            <Btn disabled className="gap-2.5 pl-5 pr-[15px]">Open<External /></Btn>
            <Btn disabled className="px-[19px]">Delete</Btn>
            <Btn className="gap-2.5 pl-5 pr-[18px]">Actions<Down /></Btn>
            <Btn className="px-[19px]">Create folder</Btn>
            <button className="flex h-[30px] items-center gap-2.5 rounded-[2px] bg-[#f56e00] pl-[17px] pr-5 text-sm font-bold text-white"><UploadIcon />Upload</button>
          </div>
          <div className="mt-3.5 flex items-start justify-between">
            <label className="flex h-8 w-[323px] items-center rounded-[2px] border border-[#aab7b8] bg-white px-2">
              <Magnifier className="shrink-0 text-[#687078]" />
              <input aria-label="Find objects" placeholder="Find objects by prefix" className="ml-2 min-w-0 flex-1 text-sm outline-none placeholder:text-[#aab7b8] placeholder:italic" />
            </label>
            <div className="-mt-1 flex h-[30px] items-center pr-0.5 text-[#545b64]">
              <button aria-label="Previous page" className="w-[9px]">
                <svg width="9" height="16" viewBox="0 0 9 16" fill="none" stroke="#aab7b8" strokeWidth="1.800" aria-hidden="true"><path d="M8 1L1 8l7 7" /></svg>
              </button>
              <button className="ml-[21px] w-2 font-bold text-[#16191f]">1</button>
              <button className="ml-[22px] w-2">2</button>
              <button aria-label="Next page" className="ml-[22px] w-[9px]">
                <svg width="9" height="16" viewBox="0 0 9 16" fill="none" stroke="#545b64" strokeWidth="1.800" aria-hidden="true"><path d="M1 1l7 7-7 7" /></svg>
              </button>
              <span className="ml-4 h-[30px] w-px bg-[#eaeded]" />
              <button aria-label="Preferences" className="ml-[17px]">
                <svg width="16" height="16" viewBox="0 0 16 16" fill="none" stroke="#545b64" strokeWidth="1.700" aria-hidden="true">
                  <path d="M13.540 5.700A2.500 2.500 0 0113.540 10.300 2.500 2.500 0 0110.300 13.540 2.500 2.500 0 015.700 13.540 2.500 2.500 0 012.460 10.300 2.500 2.500 0 012.460 5.700 2.500 2.500 0 015.700 2.460 2.500 2.500 0 0110.300 2.460 2.500 2.500 0 0113.540 5.700z" />
                  <circle cx="8" cy="8" r="1.900" strokeWidth="1.500" />
                </svg>
              </button>
            </div>
          </div>
        </div>
        <ObjectsTable />
      </section>
    </main>
  );
}

function Footer() {
  return (
    <footer className="flex h-[29px] shrink-0 items-center border-t border-[#3b4656] bg-[#232b3d] px-5 text-[11px] font-medium text-white">
      <button>Feedback</button>
      <span className="ml-[26px] flex items-center text-[#95a5a6]">
        <span>Looking for language selection? Find it in the new&nbsp;</span>
        <a href="#settings" className="flex items-center gap-[3px] text-white">Unified Settings <External /></a>
      </span>
      <span className="ml-auto">© 2022, Amazon Web Services, Inc. or its affiliates.</span>
      <a href="#privacy" className="ml-[30px]">Privacy</a>
      <a href="#terms" className="ml-[26px]">Terms</a>
      <a href="#cookies" className="ml-[25px]">Cookie preferences</a>
    </footer>
  );
}

export default function App() {
  return (
    <div className="flex h-screen flex-col overflow-hidden bg-white font-['Noto_Sans','DejaVu_Sans',sans-serif]">
      <TopBar />
      <div className="flex min-h-0 flex-1">
        <Dock />
        <div className="flex min-w-0 flex-1 flex-col">
          <TabStrip />
          <Toolbar />
          <div className="flex min-h-0 flex-1">
            <div className="flex min-w-0 flex-1 flex-col">
              <AwsNav />
              <div className="flex min-h-0 flex-1">
                <Sidebar />
                <Main />
                <aside className="flex w-[41px] shrink-0 flex-col items-center border-l border-[#c3c8ca] bg-white pt-3">
                  <button aria-label="Open info panel">
                    <svg width="16" height="16" viewBox="0 0 16 16" fill="none" stroke="#545b64" strokeWidth="1.800" aria-hidden="true">
                      <circle cx="8" cy="8" r="7" /><path d="M8 3.500v2M6 7.300h2v4M5.800 11.500h4.400" />
                    </svg>
                  </button>
                </aside>
              </div>
              <Footer />
            </div>
            <div className="flex w-[15px] shrink-0 flex-col items-center bg-[#f1f1f1] py-1.5">
              <Down w={7} h={4} className="rotate-180 text-[#505050]" />
              <div className="mt-2 h-11 w-[11px] bg-[#c1c1c1]" />
              <Down w={7} h={4} className="mt-auto text-[#505050]" />
            </div>
          </div>
        </div>
      </div>
    </div>
  );
}
